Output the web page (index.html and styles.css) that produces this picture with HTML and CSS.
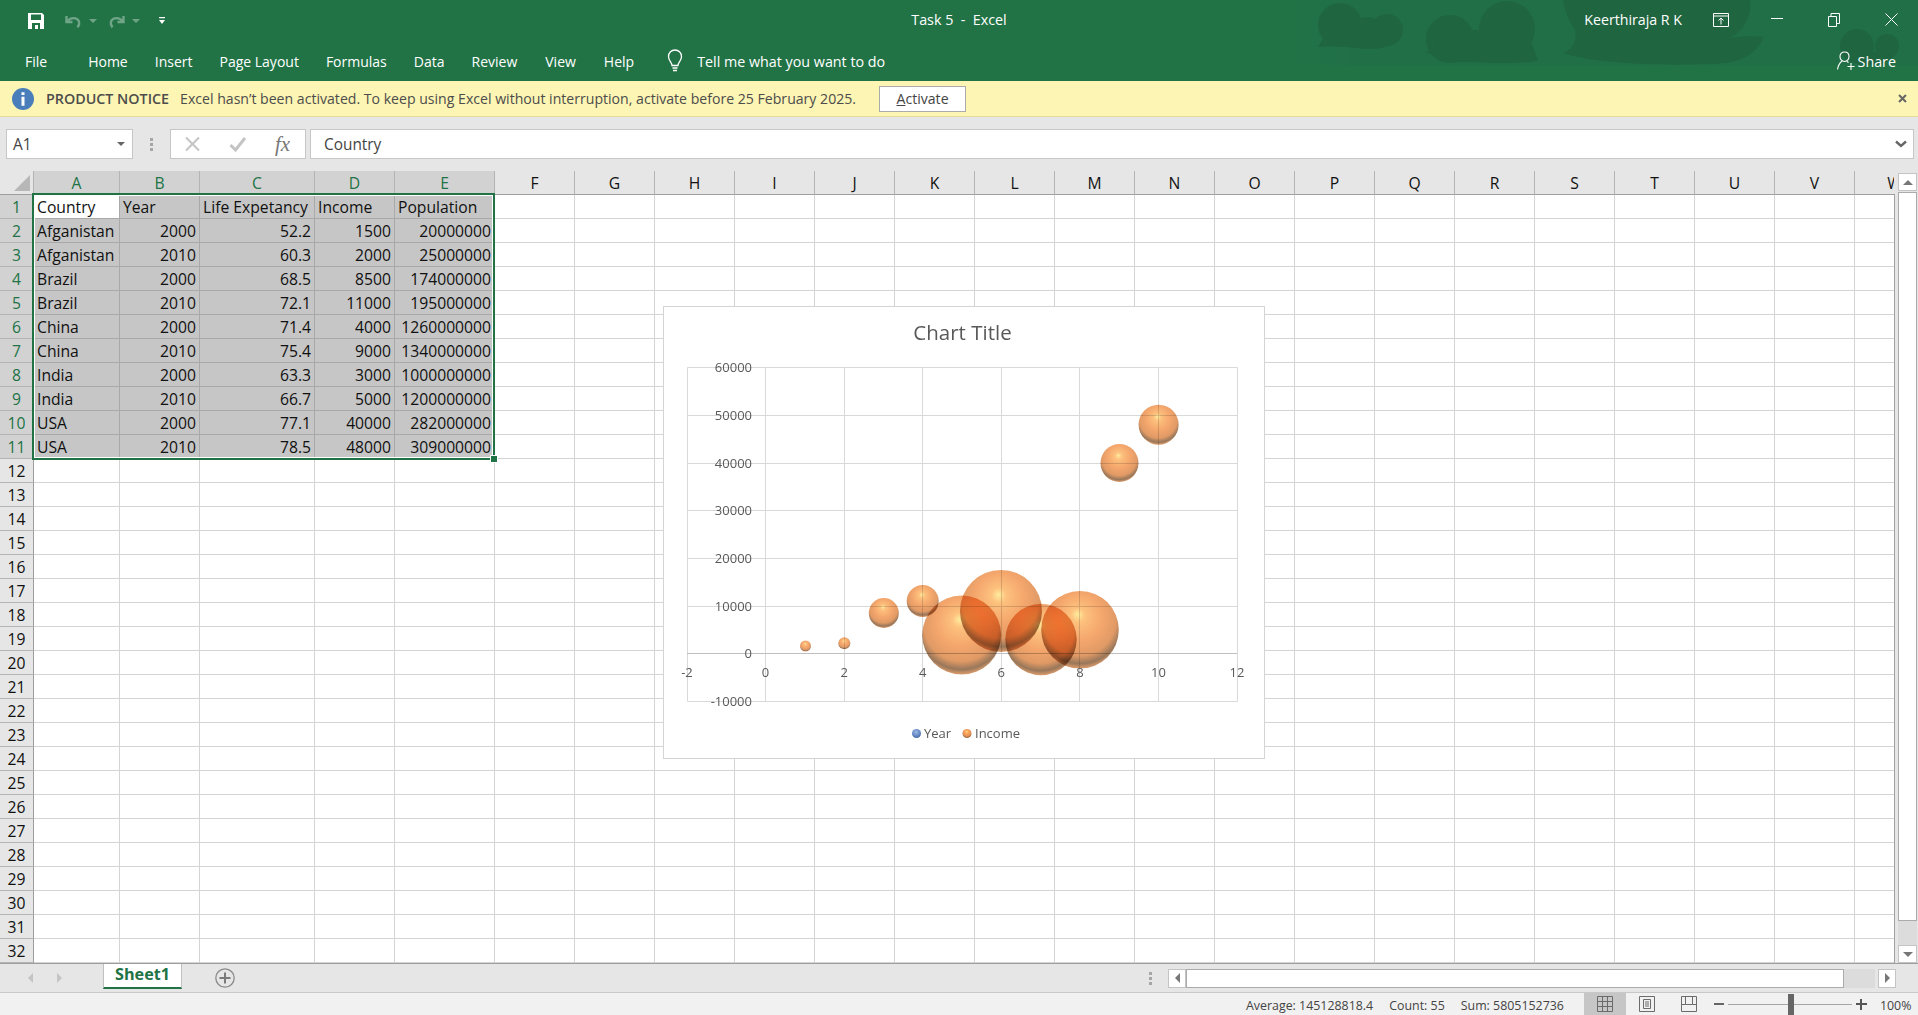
FILE: index.html
```html
<!DOCTYPE html>
<html lang="en">
<head>
  <meta charset="UTF-8" />
  <title>Task 5 - Excel</title>
  <link rel="stylesheet" href="styles.css">
</head>
<body>

  <!-- TITLE BAR + TABS -->
  <header class="ribbon">
    <svg class="ribbon-art" viewBox="0 0 628 66" width="628" height="66">
      <defs>
        <linearGradient id="haze">
          <stop offset="0" stop-color="#21704a" stop-opacity="0"/>
          <stop offset=".1" stop-color="#216f47"/>
          <stop offset="1" stop-color="#216f47"/>
        </linearGradient>
      </defs>
      <rect width="628" height="65" fill="url(#haze)"/>
      <circle cx="50" cy="25" r="22"/>
      <circle cx="78" cy="31" r="14"/>
      <circle cx="97" cy="30" r="16"/>
      <path d="M28 47 36 34H110C113 42 100 47 85 49 70 50 50 44 28 47z"/>
      <circle cx="217" cy="29" r="28"/>
      <circle cx="160" cy="39" r="24"/>
      <rect x="160" y="30" width="80" height="32"/>
      <path d="M135 52C150 50 150 45 150 40H240C245 50 245 55 248 60 240 65 160 65 135 52z"/>
      <path d="M273 0H460C462 15 455 30 440 38 452 36 465 36 473 37 470 50 455 60 437 63 400 66 310 66 273 53 285 48 287 38 285 30 278 20 275 10 273 0z"/>
      <circle cx="567" cy="46" r="17"/>
      <circle cx="597" cy="46" r="12"/>
      <path d="M552 52H608C600 60 595 65 585 65H570C560 62 555 58 552 52z"/>
    </svg>
    <div class="titlebar">
      <div class="qat">
        <svg class="qat-save" width="16" height="16" viewBox="0 0 16 16"><path fill="#fff" d="M0 0h14l2 2v14H0z"/><path fill="#217346" d="M3 1.500h10v5.500H3zM4 10h8v6h-2v-4H7v4H4z"/></svg>
        <svg class="qat-undo" width="19" height="16" viewBox="0 0 18 16"><path fill="none" stroke="#6fa487" stroke-width="2.400" d="M2 3v6h6M2.600 8.600C5 5.400 8 4.600 11 5.400c4 1.200 5 5.600 2 9"/></svg>
        <i class="caret caret-dim"></i>
        <svg class="qat-redo" width="19" height="16" viewBox="0 0 18 16"><path fill="none" stroke="#6fa487" stroke-width="2.400" d="M16 3v6h-6M15.400 8.600C13 5.400 10 4.600 7 5.400c-4 1.200-5 5.600-2 9"/></svg>
        <i class="caret caret-dim"></i>
        <svg class="qat-more" width="8" height="10" viewBox="0 0 8 10"><path fill="#fff" d="M1 1h6v1.200H1zM1 4h6L4 8z"/></svg>
      </div>
      <div class="doc-title">Task 5&nbsp; -&nbsp; Excel</div>
      <div class="user">Keerthiraja R K</div>
      <div class="win-btns">
        <svg width="16" height="14" viewBox="0 0 16 14"><path fill="none" stroke="#fff" d="M.5.5h15v13H.5zM.5 3h15M8 11.500V5M5.500 7.500 8 5l2.500 2.500"/></svg>
        <svg width="12" height="12" viewBox="0 0 12 12"><path stroke="#fff" d="M0 4.500h12"/></svg>
        <svg width="12" height="14" viewBox="0 0 12 14"><path fill="none" stroke="#fff" d="M.5 3.500h8v10h-8zM3 3.500V.5h8.500v10H8.500"/></svg>
        <svg width="13" height="13" viewBox="0 0 13 13"><path stroke="#fff" d="M.5.5l12 12M12.500.5l-12 12"/></svg>
      </div>
    </div>
    <nav class="tabs">
      <span class="tab tab-file">File</span>
      <span class="tab tab-home">Home</span>
      <span class="tab">Insert</span>
      <span class="tab">Page Layout</span>
      <span class="tab">Formulas</span>
      <span class="tab">Data</span>
      <span class="tab">Review</span>
      <span class="tab tab-wide">View</span>
      <span class="tab tab-wide">Help</span>
      <svg class="bulb" width="16" height="24" viewBox="0 0 16 24"><path fill="none" stroke="#fff" stroke-width="1.300" d="M5 16.500c0-3-3.500-4.500-3.500-9C1.500 3.500 4.500 1 8 1s6.500 2.500 6.500 6.500c0 4.500-3.500 6-3.500 9zM5.500 19h5M6 21.500h4"/></svg>
      <span class="tell">Tell me what you want to do</span>
      <span class="share">
        <svg width="20" height="20" viewBox="0 0 20 20"><path fill="none" stroke="#fff" stroke-width="1.100" d="M7.500 1c3 0 4.500 2 4.500 4.500S10.500 10.500 7.500 10.500 3 8 3 5.500 4.500 1 7.500 1zM5 10C2.500 12 1 15 .5 18.500M10 10.500l1.500 1M14 12v7M10.500 15.500h7"/></svg>
        Share
      </span>
    </nav>
  </header>

  <!-- PRODUCT NOTICE -->
  <div class="notice">
    <svg class="notice-icon" width="22" height="22" viewBox="0 0 22 22"><circle cx="11" cy="11" r="11" fill="#4a7ebb"/><path fill="#fff" d="M9.500 4.200h3v2.800h-3zM9.500 8.800h3v9h-3z"/></svg>
    <strong class="notice-head">PRODUCT NOTICE</strong>
    <span class="notice-text">Excel hasn’t been activated. To keep using Excel without interruption, activate before 25 February 2025.</span>
    <button class="activate"><u>A</u>ctivate</button>
    <svg class="notice-close" width="9" height="9" viewBox="0 0 9 9"><path stroke="#666" stroke-width="2" d="M1 1l7 7M8 1L1 8"/></svg>
  </div>

  <!-- FORMULA BAR -->
  <div class="formula-bar">
    <div class="name-box">A1<i class="caret"></i></div>
    <div class="grip"></div>
    <div class="fx-box">
      <svg width="16" height="16" viewBox="0 0 16 16"><path stroke="#c4c4c4" stroke-width="2" d="M1 1.500l13 13M14 1.500l-13 13"/></svg>
      <svg width="18" height="16" viewBox="0 0 18 16"><path fill="none" stroke="#c4c4c4" stroke-width="3" d="M1.500 9l5 5L16 2"/></svg>
      <span class="fx">fx</span>
    </div>
    <div class="formula-input">Country
      <svg width="12" height="8" viewBox="0 0 12 8"><path fill="none" stroke="#666" stroke-width="2.400" d="M1 1.500l5 4.500 5-4.500"/></svg>
    </div>
  </div>

  <!-- SHEET -->
  <main class="sheet">
    <div class="grid" id="grid"></div>
    <div class="selection"><i class="handle"></i></div>

    <div class="chart">
      <svg width="600" height="451" viewBox="0 0 600 451">
        <defs>
          <radialGradient id="ball" cx=".5" cy=".38" r=".66" fx=".47" fy=".3">
            <stop offset="0" stop-color="#ffe98f"/>
            <stop offset=".14" stop-color="#fdb96c"/>
            <stop offset=".45" stop-color="#f49b58"/>
            <stop offset=".72" stop-color="#dd8c50"/>
            <stop offset=".86" stop-color="#8a6443"/>
            <stop offset=".94" stop-color="#d58c56"/>
            <stop offset="1" stop-color="#ffb279"/>
          </radialGradient>
          <radialGradient id="blue" cx=".45" cy=".35" r=".7">
            <stop offset="0" stop-color="#9db8e6"/>
            <stop offset=".7" stop-color="#5b7fbd"/>
            <stop offset="1" stop-color="#3f5f96"/>
          </radialGradient>
        </defs>

        <g class="gridlines">
          <path d="M23.500 60.500h550M23.500 108.500h550M23.500 156.500h550M23.500 203.500h550M23.500 251.500h550M23.500 299.500h550M23.500 394.500h550"/>
          <path d="M23.500 60.500v334M101.500 60.500v334M180.500 60.500v334M258.500 60.500v334M337.500 60.500v334M415.500 60.500v334M494.500 60.500v334M573.500 60.500v334"/>
        </g>
        <path class="zero-axis" d="M23 346.500h550"/>

        <g class="bubbles">
          <circle cx="141.500" cy="339" r="5.500"/>
          <circle cx="180.300" cy="336.300" r="6"/>
          <circle cx="219.800" cy="306" r="15"/>
          <circle cx="258.700" cy="294" r="16"/>
          <circle cx="297.700" cy="328" r="39.500"/>
          <circle cx="337" cy="304" r="41"/>
          <circle cx="377" cy="332.500" r="35.700"/>
          <circle cx="416" cy="322.800" r="38.800"/>
          <circle cx="455.500" cy="156" r="19"/>
          <circle cx="494.600" cy="117.700" r="20"/>
        </g>

        <text class="chart-title" x="298.500" y="33">Chart Title</text>

        <g class="y-labels">
          <text x="88" y="65">60000</text>
          <text x="88" y="113">50000</text>
          <text x="88" y="161">40000</text>
          <text x="88" y="208">30000</text>
          <text x="88" y="256">20000</text>
          <text x="88" y="304">10000</text>
          <text x="88" y="351">0</text>
          <text x="88" y="399">-10000</text>
        </g>
        <g class="x-labels">
          <text x="23" y="370">-2</text>
          <text x="101.500" y="370">0</text>
          <text x="180.300" y="370">2</text>
          <text x="258.700" y="370">4</text>
          <text x="337.300" y="370">6</text>
          <text x="415.900" y="370">8</text>
          <text x="494.500" y="370">10</text>
          <text x="573" y="370">12</text>
        </g>

        <circle cx="252.500" cy="426.500" r="4.500" fill="url(#blue)"/>
        <text class="legend" x="260" y="431">Year</text>
        <circle cx="303" cy="426.500" r="4.500" fill="url(#ball)"/>
        <text class="legend" x="311" y="431">Income</text>
      </svg>
    </div>

    <div class="gutter">
      <div class="sb-btn"><i class="arrow-up"></i></div>
      <div class="sb-thumb"></div>
      <div class="sb-track"></div>
      <div class="sb-btn"><i class="arrow-down"></i></div>
    </div>
  </main>

  <!-- SHEET TABS + H SCROLL -->
  <div class="tabbar">
    <i class="nav-left"></i>
    <i class="nav-right"></i>
    <div class="sheet-tab">Sheet1</div>
    <svg class="add-sheet" width="20" height="20" viewBox="0 0 20 20"><circle cx="10" cy="10" r="9.200" fill="none" stroke="#8a8a8a" stroke-width="1.300"/><path stroke="#7a7a7a" stroke-width="2" d="M10 4.500v11M4.500 10h11"/></svg>
    <div class="grip grip-h"></div>
    <div class="hscroll">
      <div class="hs-btn"><i class="nav-left dark"></i></div>
      <div class="hs-thumb"></div>
      <div class="hs-track"></div>
      <div class="hs-btn hs-end"><i class="nav-right dark"></i></div>
    </div>
  </div>

  <!-- STATUS BAR -->
  <footer class="status">
    <span class="stat">Average: 145128818.4</span>
    <span class="stat">Count: 55</span>
    <span class="stat">Sum: 5805152736</span>
    <div class="view-btn active">
      <svg width="16" height="16" viewBox="0 0 16 16"><path fill="none" stroke="#6b6b6b" d="M.5.5h15v15H.5zM.5 5.500h15M.5 10.500h15M5.500.5v15M10.500.5v15"/></svg>
    </div>
    <div class="view-btn">
      <svg width="16" height="16" viewBox="0 0 16 16"><path fill="none" stroke="#6b6b6b" d="M.5.5h15v15H.5zM4.500 3.500h7v9h-7zM6 6h4M6 8h4M6 10h4"/></svg>
    </div>
    <div class="view-btn">
      <svg width="16" height="16" viewBox="0 0 16 16"><path fill="none" stroke="#6b6b6b" d="M.5.5h15v15H.5zM4.500.5v8h7v-8M.5 8.500h4M11.500 8.500h4"/></svg>
    </div>
    <div class="zoom">
      <i class="zoom-minus"></i>
      <div class="zoom-line"><i class="zoom-thumb"></i></div>
      <i class="zoom-plus"></i>
    </div>
    <span class="zoom-pct">100%</span>
  </footer>

  <script src="script.js"></script>
</body>
</html>
```

FILE: styles.css
```css
* {
  box-sizing: border-box;
}

body {
  margin: 0;
  width: 1918px;
  height: 1015px;
  overflow: hidden;
  display: flex;
  flex-direction: column;
  font-family: 'Open Sans', sans-serif;
  font-size: 14px;
  background: #e6e6e6;
  color: #444;
}

i {
  display: block;
}

.caret {
  width: 0;
  height: 0;
  border: 4px solid transparent;
  border-top: 4px solid #666;
  border-bottom: 0;
}

.caret-dim {
  border-top-color: #6fa487;
}

/* Ribbon */
.ribbon {
  position: relative;
  height: 81px;
  flex: none;
  background: #217346;
  color: #fff;
}

.ribbon-art {
  position: absolute;
  top: 0;
  right: 0;
  fill: #1f6540;
}

.titlebar {
  position: relative;
  height: 41px;
  display: flex;
  align-items: center;
  padding-bottom: 2px;
}

.qat {
  position: relative;
  top: 1px;
  display: flex;
  align-items: center;
  padding-left: 28px;
  width: 300px;
}

.qat-undo { margin-left: 20px; }
.qat-redo { margin-left: 10px; }
.qat .caret { margin-left: 6px; }
.qat-more { margin-left: 18px; }

.doc-title {
  position: absolute;
  left: 0;
  right: 0;
  text-align: center;
  font-size: 14.300px;
}

.user {
  position: relative;
  margin-left: auto;
  font-size: 14.200px;
}

.win-btns {
  position: relative;
  display: flex;
  align-items: center;
  margin-left: 31px;
  padding-right: 20px;
}

.win-btns svg + svg { margin-left: 42px; }
.win-btns svg:nth-child(3) { margin-left: 45px; }
.win-btns svg:nth-child(4) { margin-left: 45px; }

.tabs {
  position: relative;
  height: 40px;
  display: flex;
  align-items: center;
  font-size: 14px;
}

.tab {
  margin-left: 27px;
  white-space: nowrap;
}

.tab-file { margin-left: 25px; }
.tab-home { margin-left: 41px; }
.tab-wide { margin-left: 28px; }

.bulb { margin-left: 33px; }

.tell {
  margin-left: 14px;
  font-size: 14.300px;
}

.share {
  margin-left: auto;
  margin-right: 22px;
  display: flex;
  align-items: center;
  gap: 1px;
  font-size: 14.300px;
}

/* Notice */
.notice {
  height: 36px;
  flex: none;
  display: flex;
  align-items: center;
  background: #fdf5b3;
  border-bottom: 1px solid #e4dc96;
  font-size: 14.100px;
  color: #4c4c4c;
}

.notice-icon { margin-left: 12px; }
.notice-head { margin-left: 12px; font-weight: 600; font-size: 14.300px; }
.notice-text { margin-left: 11px; }

.activate {
  margin-left: 23px;
  width: 87px;
  height: 26px;
  border: 1px solid #ababab;
  background: #fff;
  font: inherit;
  color: #444;
  padding: 0;
}

.notice-close {
  margin-left: auto;
  margin-right: 11px;
}

/* Formula bar */
.formula-bar {
  height: 54px;
  flex: none;
  display: flex;
  align-items: flex-start;
  padding: 12px 4px 0 6px;
  background: #e6e6e6;
}

.name-box, .fx-box, .formula-input {
  height: 30px;
  display: flex;
  align-items: center;
  background: #fff;
  border: 1px solid #c6c6c6;
  font-size: 15.400px;
}

.name-box {
  width: 127px;
  padding: 0 7px 0 6px;
  justify-content: space-between;
}

.grip {
  width: 3px;
  height: 13px;
  margin: 9px 17px 0 17px;
  background: repeating-linear-gradient(#a6a6a6 0 3px, transparent 3px 5px);
}

.fx-box {
  width: 136px;
  padding-left: 14px;
  gap: 28px;
}

.fx {
  margin-left: 0;
  font-family: 'Liberation Serif', serif;
  font-style: italic;
  font-size: 21px;
  color: #777;
}

.formula-input {
  flex: 1;
  margin-left: 4px;
  padding: 0 6px 0 13px;
  justify-content: space-between;
}

/* Sheet */
.sheet {
  position: relative;
  height: 792px;
  flex: none;
  display: flex;
}

.grid {
  width: 1894px;
  height: 792px;
  overflow: hidden;
  display: grid;
  grid-template-columns: 34px 86px 80px 115px 80px 100px repeat(18, 80px);
  grid-template-rows: 24px repeat(32, 24px);
  font-size: 15.700px;
  background: #fff;
  color: #111;
}

.cell {
  border-right: 1px solid #d4d4d4;
  border-bottom: 1px solid #d4d4d4;
  padding: 0 3px;
  line-height: 24px;
  white-space: nowrap;
  overflow: hidden;
}

.cell.num { text-align: right; }

.cell.sel {
  background: #c6c6c6;
  border-color: #a9a9a9;
}

.cell.first {
  background: #fff;
  border-color: #a9a9a9;
}

.col-head, .row-head, .corner {
  background: #e6e6e6;
  text-align: center;
  color: #111;
}

.col-head {
  border-right: 1px solid #b4b4b4;
  border-bottom: 1px solid #9e9e9e;
  line-height: 24px;
}

.row-head {
  border-right: 1px solid #9e9e9e;
  border-bottom: 1px solid #b4b4b4;
  line-height: 24px;
}

.col-head.on, .row-head.on {
  background: #d2d2d2;
  color: #217346;
}

.corner {
  position: relative;
  border-right: 1px solid #b4b4b4;
  border-bottom: 1px solid #9e9e9e;
}

.corner::after {
  content: "";
  position: absolute;
  right: 3px;
  bottom: 3px;
  border-style: solid;
  border-width: 0 0 16px 16px;
  border-color: transparent transparent #b7b7b7 transparent;
}

.selection {
  position: absolute;
  left: 32px;
  top: 22px;
  width: 463px;
  height: 267px;
  border: 2px solid #217346;
  box-shadow: inset 0 0 0 1px #fff;
  pointer-events: none;
}

.handle {
  position: absolute;
  right: -4px;
  bottom: -4px;
  width: 6px;
  height: 6px;
  background: #217346;
  outline: 1px solid #fff;
}

/* Chart */
.chart {
  position: absolute;
  left: 664px;
  top: 136px;
  width: 600px;
  height: 451px;
  background: #fff;
  outline: 1px solid #d4d4d4;
}

.chart svg {
  display: block;
  isolation: isolate;
}

.gridlines path {
  fill: none;
  stroke: #d9d9d9;
}

.zero-axis {
  stroke: #bfbfbf;
  fill: none;
}

.bubbles circle {
  fill: url(#ball);
  mix-blend-mode: multiply;
  opacity: .88;
}

.chart text {
  font-family: 'Open Sans', sans-serif;
  fill: #595959;
}

.chart .chart-title {
  font-size: 20.500px;
  text-anchor: middle;
}

.y-labels text {
  font-size: 13px;
  text-anchor: end;
}

.x-labels text {
  font-size: 13px;
  text-anchor: middle;
}

.chart .legend {
  font-size: 13px;
}

/* Scrollbars */
.gutter {
  width: 24px;
  padding: 2px 1px 0 4px;
  display: flex;
  flex-direction: column;
  background: linear-gradient(#a0a0a0, #a0a0a0) 0 23px / 1px 100% no-repeat, #e6e6e6;
}

.sb-btn {
  height: 18px;
  flex: none;
  display: flex;
  align-items: center;
  justify-content: center;
  background: #fff;
  border: 1px solid #c4c4c4;
}

.sb-thumb {
  height: 729px;
  flex: none;
  margin-top: 1px;
  background: #fff;
  border: 1px solid #ababab;
}

.sb-track {
  flex: 1;
  background: #dcdcdc;
}

.arrow-up, .arrow-down {
  width: 0;
  height: 0;
  border-left: 5px solid transparent;
  border-right: 5px solid transparent;
}

.arrow-up { border-bottom: 5px solid #777; }
.arrow-down { border-top: 5px solid #777; }

/* Tab bar */
.tabbar {
  height: 30px;
  flex: none;
  display: flex;
  align-items: center;
  background: #e6e6e6;
  border-top: 1px solid #9e9e9e;
  border-bottom: 1px solid #c8c8c8;
}

.nav-left, .nav-right {
  width: 0;
  height: 0;
  border-top: 5px solid transparent;
  border-bottom: 5px solid transparent;
}

.nav-left { border-right: 5px solid #c4c4c4; }
.nav-right { border-left: 5px solid #c4c4c4; }
.nav-left.dark { border-right-color: #777; }
.nav-right.dark { border-left-color: #777; }

.tabbar > .nav-left { margin-left: 28px; }
.tabbar > .nav-right { margin-left: 24px; }

.sheet-tab {
  align-self: flex-start;
  margin-left: 41px;
  width: 79px;
  height: 25px;
  background: #fff;
  border-left: 1px solid #c0c0c0;
  border-right: 1px solid #c0c0c0;
  border-bottom: 2px solid #217346;
  text-align: center;
  line-height: 20px;
  font-size: 16.200px;
  font-weight: 700;
  color: #217346;
}

.add-sheet { margin-left: 33px; }

.grip-h {
  margin: 0 16px 0 auto;
  height: 13px;
}

.hscroll {
  display: flex;
  align-items: stretch;
  width: 728px;
  height: 19px;
  margin-right: 22px;
}

.hs-btn {
  width: 18px;
  display: flex;
  align-items: center;
  justify-content: center;
  background: #fff;
  border: 1px solid #c4c4c4;
}

.hs-end { margin-left: 3px; }

.hs-thumb {
  width: 658px;
  background: #fff;
  border: 1px solid #ababab;
}

.hs-track {
  flex: 1;
  background: #dcdcdc;
}

/* Status bar */
.status {
  flex: 1;
  display: flex;
  align-items: center;
  background: #f1f1f1;
  font-size: 12.400px;
  color: #444;
  padding-left: 1246px;
}

.stat { padding-top: 2px; }
.stat + .stat { margin-left: 16px; }

.view-btn {
  width: 42px;
  height: 22px;
  display: flex;
  align-items: center;
  justify-content: center;
}

.stat + .view-btn { margin-left: 20px; }
.view-btn.active { background: #c6c6c6; }

.zoom {
  display: flex;
  align-items: center;
  margin-left: 4px;
}

.zoom-minus {
  width: 10px;
  height: 2px;
  background: #666;
}

.zoom-line {
  position: relative;
  width: 124px;
  height: 1px;
  margin: 0 4px;
  background: #a6a6a6;
}

.zoom-thumb {
  position: absolute;
  left: 60px;
  top: -10px;
  width: 6px;
  height: 21px;
  background: #666;
}

.zoom-plus {
  width: 11px;
  height: 11px;
  background:
    linear-gradient(#555, #555) center / 11px 2px no-repeat,
    linear-gradient(#555, #555) center / 2px 11px no-repeat;
}

.zoom-pct { margin-left: 13px; padding-top: 2px; }
```

FILE: script.js
```js
// sheet data, header row first
const data = [
  ["Country", "Year", "Life Expetancy", "Income", "Population"],
  ["Afganistan", 2000, 52.2, 1500, 20000000],
  ["Afganistan", 2010, 60.3, 2000, 25000000],
  ["Brazil", 2000, 68.5, 8500, 174000000],
  ["Brazil", 2010, 72.1, 11000, 195000000],
  ["China", 2000, 71.4, 4000, 1260000000],
  ["China", 2010, 75.4, 9000, 1340000000],
  ["India", 2000, 63.3, 3000, 1000000000],
  ["India", 2010, 66.7, 5000, 1200000000],
  ["USA", 2000, 77.1, 40000, 282000000],
  ["USA", 2010, 78.5, 48000, 309000000]
];

const letters = "ABCDEFGHIJKLMNOPQRSTUVW".split("");
const grid = document.getElementById("grid");

function add(cls, text) {
  const el = document.createElement("div");
  el.className = cls;
  if (text !== undefined) el.textContent = text;
  grid.appendChild(el);
}

add("corner");
letters.forEach((l, i) => add("col-head" + (i < 5 ? " on" : ""), l));

for (let r = 0; r < 32; r++) {
  add("row-head" + (r < 11 ? " on" : ""), r + 1);
  letters.forEach((l, c) => {
    const row = data[r];
    if (row && c < 5) {
      const v = row[c];
      let cls = "cell " + (r === 0 && c === 0 ? "first" : "sel");
      if (typeof v === "number") cls += " num";
      add(cls, v);
    } else {
      add("cell");
    }
  });
}
```
